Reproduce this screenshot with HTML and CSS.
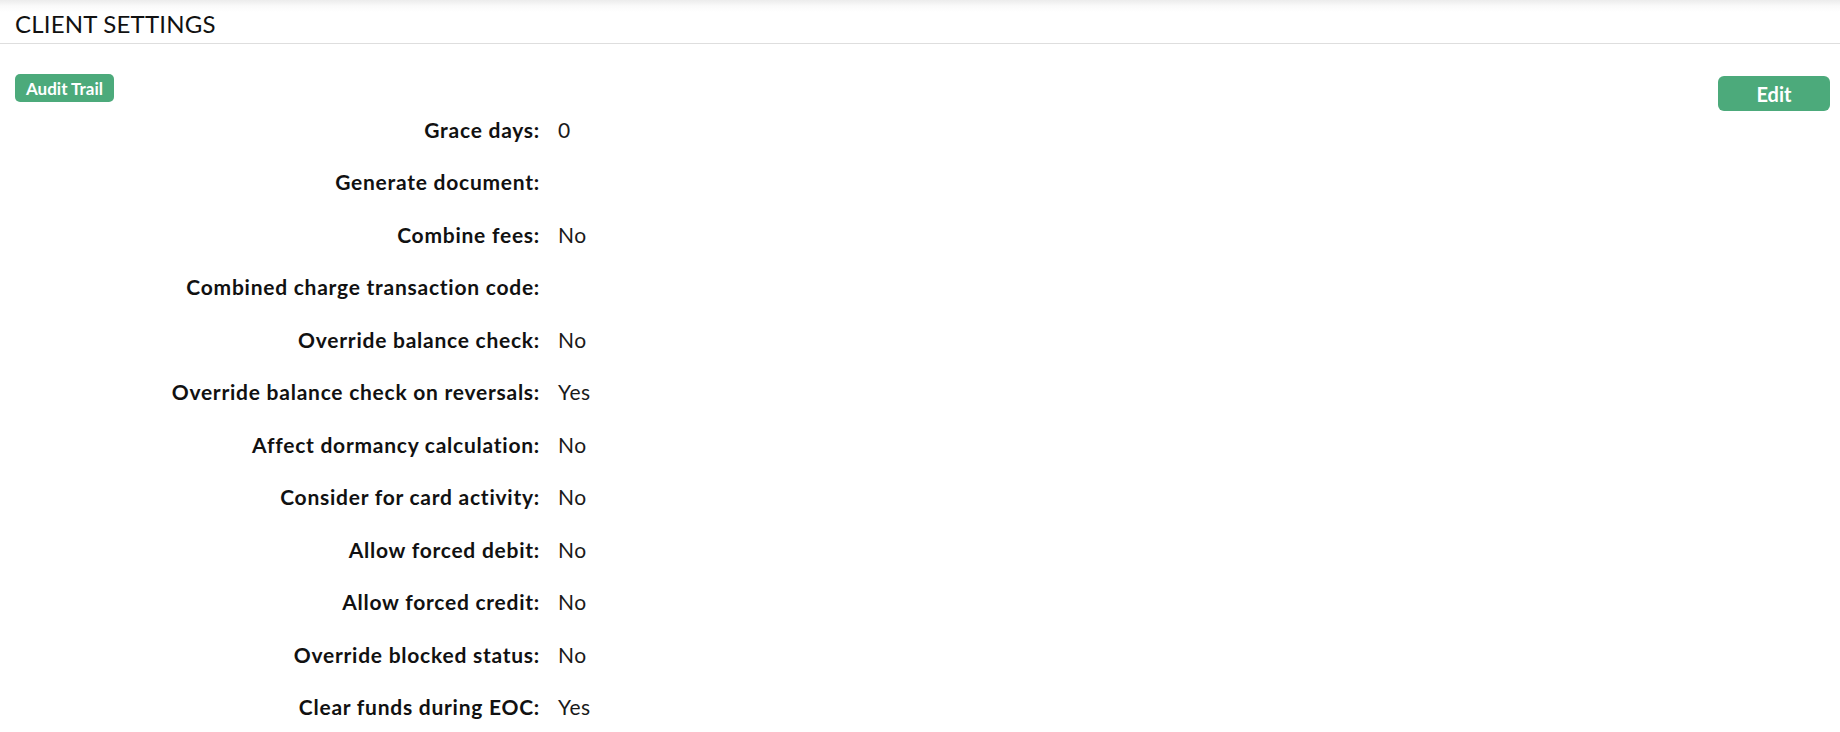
FILE: index.html
```html
<!DOCTYPE html>
<html>
<head>
<meta charset="utf-8">
<link rel="stylesheet" href="styles.css">
</head>
<body>
<div class="page">
  <header class="page-header">
    <h1 class="page-title">CLIENT SETTINGS</h1>
  </header>
  <div class="content">
    <div class="toolbar">
      <span class="badge">Audit Trail</span>
      <button class="btn-edit">Edit</button>
    </div>
    <div class="details">
      <div class="row"><div class="label">Grace days:</div><div class="value">0</div></div>
      <div class="row"><div class="label">Generate document:</div><div class="value"></div></div>
      <div class="row"><div class="label">Combine fees:</div><div class="value">No</div></div>
      <div class="row"><div class="label">Combined charge transaction code:</div><div class="value"></div></div>
      <div class="row"><div class="label">Override balance check:</div><div class="value">No</div></div>
      <div class="row"><div class="label">Override balance check on reversals:</div><div class="value">Yes</div></div>
      <div class="row"><div class="label">Affect dormancy calculation:</div><div class="value">No</div></div>
      <div class="row"><div class="label">Consider for card activity:</div><div class="value">No</div></div>
      <div class="row"><div class="label">Allow forced debit:</div><div class="value">No</div></div>
      <div class="row"><div class="label">Allow forced credit:</div><div class="value">No</div></div>
      <div class="row"><div class="label">Override blocked status:</div><div class="value">No</div></div>
      <div class="row"><div class="label">Clear funds during EOC:</div><div class="value">Yes</div></div>
    </div>
  </div>
</div>
</body>
</html>
```

FILE: styles.css
```css
html, body {
  margin: 0;
  padding: 0;
  background: #fff;
}
body {
  font-family: "Lato", "Open Sans", sans-serif;
  color: #111;
}
.page-header {
  height: 44px;
  border-bottom: 1px solid #dedede;
  background: linear-gradient(to bottom, #ececec 0px, #fafafa 6px, #ffffff 12px);
  box-sizing: border-box;
  display: flex;
  align-items: center;
  padding-left: 15px;
}
.page-title {
  margin: 0;
  font-size: 24px;
  font-weight: 400;
  color: #111;
  letter-spacing: 0.2px;
  padding-top: 4px;
}
.content {
  padding: 30px 10px 0 15px;
}
.toolbar {
  display: flex;
  justify-content: space-between;
  align-items: flex-start;
  height: 29px;
}
.badge {
  display: inline-flex;
  align-items: center;
  justify-content: center;
  width: 99px;
  height: 28px;
  box-sizing: border-box;
  background: #4caa7b;
  color: #fff;
  font-weight: 700;
  font-size: 17px;
  border-radius: 5px;
}
.btn-edit {
  margin-top: 2px;
  width: 112px;
  height: 35px;
  border: none;
  border-radius: 6px;
  background: #4caa7b;
  color: #fff;
  font-family: inherit;
  font-weight: 700;
  font-size: 20px;
  padding: 0;
}
.row {
  display: grid;
  grid-template-columns: 525px 1fr;
  column-gap: 18px;
  height: 52.5px;
  align-items: center;
  font-size: 21px;
}
.label {
  text-align: right;
  font-weight: 700;
  color: #111;
  letter-spacing: 0.75px;
}
.value {
  color: #1a1a1a;
  letter-spacing: 0.6px;
}
```
